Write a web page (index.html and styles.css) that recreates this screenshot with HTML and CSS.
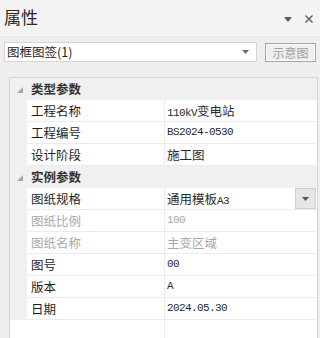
FILE: index.html
```html
<!DOCTYPE html>
<html lang="zh">
<head>
<meta charset="utf-8">
<title>属性</title>
<link rel="stylesheet" href="styles.css">
</head>
<body>
<div class="panel">
  <div class="titlebar">
    <span class="title">属性</span>
    <div class="title-tools">
      <svg class="ico" width="10" height="8" viewBox="0 0 10 8"><path d="M1 2h8L5 7z" fill="#5a5a5a"/></svg>
      <svg class="ico" width="10" height="10" viewBox="0 0 10 10"><path d="M1.5 1.5l7 7M8.5 1.5l-7 7" stroke="#5a5a5a" stroke-width="1.4"/></svg>
    </div>
  </div>
  <div class="toolbar">
    <div class="combo">
      <span class="combo-text">图框图签(1)</span>
      <svg class="combo-arrow" width="7" height="4" viewBox="0 0 7 4"><path d="M0 0h7L3.5 4z" fill="#707070"/></svg>
    </div>
    <div class="btn">示意图</div>
  </div>
  <div class="grid">
    <div class="cat"><span class="cat-tri"><svg width="6" height="6" viewBox="0 0 6 6"><path d="M6 0V6H0z" fill="#a8a8a8"/></svg></span><span class="cat-name">类型参数</span></div>
    <div class="row"><span class="gut"></span><span class="name">工程名称</span><span class="val">110kV<span class="cjk">变电站</span></span></div>
    <div class="row"><span class="gut"></span><span class="name">工程编号</span><span class="val">BS2024-0530</span></div>
    <div class="row"><span class="gut"></span><span class="name">设计阶段</span><span class="val"><span class="cjk">施工图</span></span></div>
    <div class="cat"><span class="cat-tri"><svg width="6" height="6" viewBox="0 0 6 6"><path d="M6 0V6H0z" fill="#a8a8a8"/></svg></span><span class="cat-name">实例参数</span></div>
    <div class="row"><span class="gut"></span><span class="name">图纸规格</span><span class="val val-drop"><span><span class="cjk">通用模板</span>A3</span><span class="drop"><svg width="7" height="4" viewBox="0 0 7 4"><path d="M0 0h7L3.5 4z" fill="#555"/></svg></span></span></div>
    <div class="row dis"><span class="gut"></span><span class="name">图纸比例</span><span class="val">100</span></div>
    <div class="row dis"><span class="gut"></span><span class="name">图纸名称</span><span class="val"><span class="cjk">主变区域</span></span></div>
    <div class="row"><span class="gut"></span><span class="name">图号</span><span class="val">00</span></div>
    <div class="row"><span class="gut"></span><span class="name">版本</span><span class="val">A</span></div>
    <div class="row"><span class="gut"></span><span class="name">日期</span><span class="val">2024.05.30</span></div>
    <div class="filler"><span class="fgut"></span><span class="fname"></span><span class="fval"></span></div>
  </div>
</div>
</body>
</html>
```
FILE: styles.css
```css
html, body {
  margin: 0;
  padding: 0;
  background: #eeeeee;
}
.panel {
  width: 320px;
  height: 338px;
  overflow: hidden;
  background: #eeeeee;
  font-family: "Noto Sans CJK SC", "Noto Sans", sans-serif;
  color: #1e1e1e;
  display: flex;
  flex-direction: column;
}
.titlebar {
  height: 35px;
  flex: none;
  background: #f3f3f3;
  border-bottom: 1px solid #fafafa;
  display: flex;
  align-items: center;
  justify-content: space-between;
  padding: 0 6px 0 4px;
}
.title {
  font-size: 17px;
  line-height: 20px;
  color: #2a2a2a;
  margin-top: -2px;
}
.title-tools {
  display: flex;
  align-items: center;
  gap: 11px;
  margin-top: 2px;
}
.ico { display: block; }
.toolbar {
  flex: none;
  display: flex;
  align-items: flex-start;
  padding: 6px 0 0 4px;
}
.combo {
  height: 18px;
  border: 1px solid #d4d4d4;
  background: #ffffff;
  display: flex;
  align-items: center;
  justify-content: space-between;
  padding: 0 7px 0 2px;
  box-sizing: content-box;
  width: 242px;
}
.combo-text {
  font-size: 12.5px;
  line-height: 18px;
  color: #1e1e1e;
}
.btn {
  margin-left: 8px;
  margin-top: 1px;
  width: 49px;
  height: 17px;
  border: 1px solid #a6a6a6;
  box-shadow: inset 1px 1px 0 #fdfdfd, inset -1px -1px 0 #fdfdfd;
  background: #efefef;
  font-size: 12px;
  line-height: 17px;
  text-align: center;
  color: #a0a0a0;
}
.grid {
  margin: 15px 0 0 9px;
  width: 307px;
  flex: 1;
  border: 1px solid #d6d6d6;
  border-bottom: none;
  background: #ffffff;
  display: flex;
  flex-direction: column;
}
.cat, .row {
  height: 21px;
  border-bottom: 1px solid #ececec;
  display: flex;
  align-items: center;
  flex: none;
}
.cat {
  background: #f0f0f0;
  border-bottom-color: #f0f0f0;
}
.cat-tri {
  width: 17px;
  display: flex;
  justify-content: flex-end;
  padding-right: 4px;
  box-sizing: border-box;
  margin-top: 3px;
}
.cat-tri svg { display: block; }
.cat-name {
  padding-left: 4px;
  font-size: 12.5px;
  font-weight: bold;
  color: #333333;
}
.row .gut {
  width: 17px;
  height: 22px;
  background: #f0f0f0;
  flex: none;
  align-self: flex-start;
}
.name {
  width: 133px;
  padding-left: 4px;
  height: 21px;
  line-height: 21px;
  font-size: 12.5px;
  border-right: 1px solid #ececec;
  flex: none;
}
.val {
  flex: 1;
  height: 21px;
  line-height: 21px;
  padding-left: 2px;
  font-family: "Liberation Mono", "Noto Sans CJK SC", monospace;
  font-size: 11px;
  letter-spacing: -0.6px;
  color: #2a2a2a;
}
.val .cjk {
  font-family: "Noto Sans CJK SC", sans-serif;
  font-size: 12.5px;
  letter-spacing: 0;
}
.val-drop {
  display: flex;
  justify-content: space-between;
  padding-right: 1px;
}
.drop {
  width: 19px;
  height: 19px;
  border: 1px solid #cfcfcf;
  background: #e6e6e6;
  display: flex;
  align-items: center;
  justify-content: center;
  letter-spacing: 0;
}
.drop svg { display: block; }
.dis .name, .dis .val { color: #a8a8a8; }
.filler {
  flex: 1;
  display: flex;
}
.fgut { width: 17px; flex: none; }
.fname {
  width: 137px;
  border-right: 1px solid #ececec;
  flex: none;
}
.fval { flex: 1; }
```
